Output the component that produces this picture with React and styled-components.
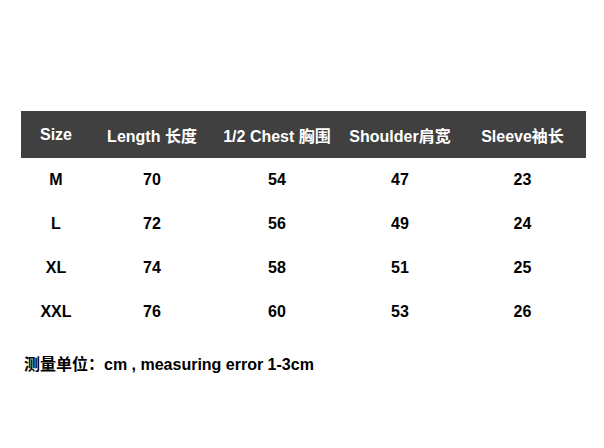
import styled, { createGlobalStyle } from "styled-components";

const GlobalStyle = createGlobalStyle`
    body {
        margin: 0;
        background: #ffffff;
        font-family: "Liberation Sans", Arial, "Noto Sans CJK SC", sans-serif;
    }
`;

const columns = ["Size", "Length 长度", "1/2 Chest 胸围", "Shoulder肩宽", "Sleeve袖长"];

const rows = [
    ["M", 70, 54, 47, 23],
    ["L", 72, 56, 49, 24],
    ["XL", 74, 58, 51, 25],
    ["XXL", 76, 60, 53, 26],
];

function App() {
    return (
        <Page>
            <GlobalStyle />
            <Table>
                <HeadRow>
                    {columns.map((col) => (
                        <Cell key={col} head>
                            {col}
                        </Cell>
                    ))}
                </HeadRow>
                {rows.map((row) => (
                    <Row key={row[0]}>
                        {row.map((val, i) => (
                            <Cell key={i}>{val}</Cell>
                        ))}
                    </Row>
                ))}
            </Table>
            <Note>测量单位：cm , measuring error 1-3cm</Note>
        </Page>
    );
}

export default App;

const Page = styled.div`
    width: 604px;
    height: 448px;
    padding: 111px 0 0 21px;
    box-sizing: border-box;
`;

const Table = styled.div`
    width: 565px;
`;

const Row = styled.div`
    display: grid;
    grid-template-columns: 70px 122px 128px 118px 127px;
    height: 44px;
    align-items: center;
`;

const HeadRow = styled(Row)`
    height: 47px;
    background: #404040;
`;

const Cell = styled.div`
    text-align: center;
    font-size: 16px;
    font-weight: 700;
    color: ${(props) => (props.head ? "#ffffff" : "#000000")};
    white-space: nowrap;
`;

const Note = styled.div`
    margin: 17px 0 0 3px;
    font-size: 16px;
    font-weight: 700;
    color: #000000;
`;
